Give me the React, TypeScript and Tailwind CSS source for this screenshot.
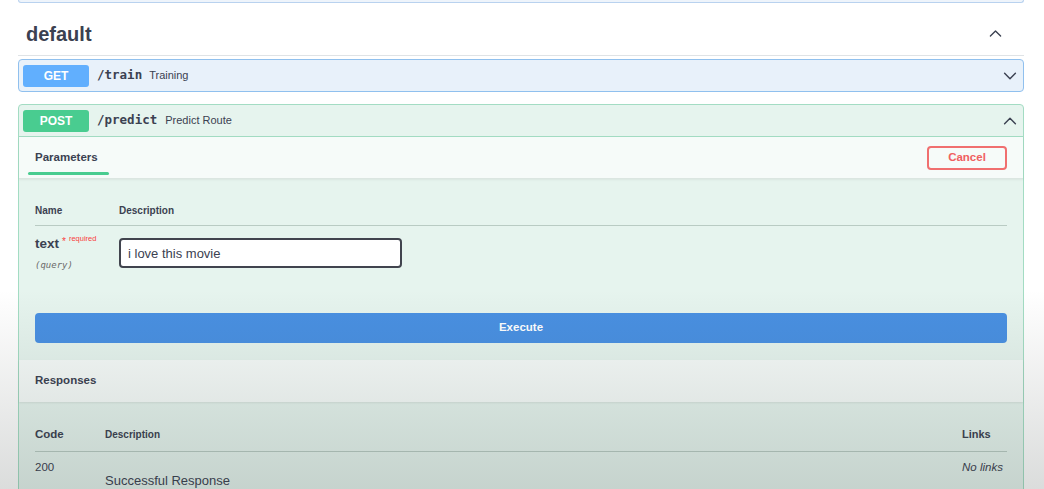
import React, { useState } from 'react';

const Chevron = ({ up, className }: { up?: boolean; className?: string }) => (
  <svg viewBox="0 0 20 20" className={className} fill="none" stroke="currentColor" strokeWidth={1.6} strokeLinecap="round" strokeLinejoin="round">
    {up ? <path d="M4 13 L10 7 L16 13" /> : <path d="M4 7 L10 13 L16 7" />}
  </svg>
);

const App: React.FC = () => {
  const [query, setQuery] = useState('i love this movie');

  return (
    <div className="relative w-full h-[489px] overflow-hidden bg-white text-[#3b4151]" style={{ fontFamily: '"Liberation Sans", Arial, sans-serif' }}>
      <div className="pl-[18px] pr-[20px]">
        {/* tail of the previous section */}
        <div className="h-[3px] border-x border-b border-[#b9d2ef] bg-[#eef4fb] rounded-b-[3px]"></div>

        {/* tag header */}
        <div className="flex items-center justify-between h-[53px] pl-[8px] pr-[20px] border-b border-[#dfe3e6]">
          <h3 className="text-[20px] font-bold text-[#3b4151] mt-[9px]">default</h3>
          <Chevron up className="w-[17px] h-[17px] text-[#3b4151] mt-[8px]" />
        </div>

        {/* GET /train */}
        <div className="mt-[3px] border border-[#90c0ee] bg-[#e8f1fa] rounded-[4px] h-[33px] flex items-center px-[4px]">
          <span className="w-[66px] h-[22px] rounded-[3px] bg-[#61affe] text-white text-[12px] font-bold flex items-center justify-center">GET</span>
          <span className="ml-[8px] text-[12.5px] font-bold text-[#3b4151]" style={{ fontFamily: '"DejaVu Sans Mono", "Liberation Mono", monospace' }}>/train</span>
          <span className="ml-[7px] text-[11px] text-[#3b4151]">Training</span>
          <span className="flex-1"></span>
          <Chevron className="w-[18px] h-[18px] text-[#3b4151]" />
        </div>

        {/* POST /predict */}
        <div className="mt-[12px] border border-[#a3dcc3] bg-[#e6f4ee] rounded-[4px]">
          <div className="h-[32px] flex items-center px-[4px] border-b border-[#a3dcc3]">
            <span className="w-[66px] h-[22px] rounded-[3px] bg-[#49cc90] text-white text-[12px] font-bold flex items-center justify-center">POST</span>
            <span className="ml-[8px] text-[12.5px] font-bold text-[#3b4151]" style={{ fontFamily: '"DejaVu Sans Mono", "Liberation Mono", monospace' }}>/predict</span>
            <span className="ml-[8px] text-[11px] text-[#3b4151]">Predict Route</span>
            <span className="flex-1"></span>
            <Chevron up className="w-[18px] h-[18px] text-[#3b4151]" />
          </div>

          {/* parameters tab bar */}
          <div className="h-[42px] bg-[#f6fbf9] flex items-center justify-between px-[10px] border-b border-[#dbe6e1] shadow-[0_1px_2px_rgba(0,0,0,0.06)]">
            <div className="relative h-full flex items-center px-[6px]">
              <span className="text-[11.5px] font-bold text-[#3b4151]">Parameters</span>
              <span className="absolute left-[-1px] right-[-5px] bottom-[3px] h-[3px] rounded-[2px] bg-[#49cc90]"></span>
            </div>
            <button className="w-[80px] h-[24px] border-2 border-[#f06f6f] rounded-[4px] text-[#f06060] text-[11.5px] font-bold bg-transparent mr-[6px]">
              Cancel
            </button>
          </div>

          {/* parameters table */}
          <div className="px-[16px] pt-[24px]">
            <div className="flex text-[10px] font-bold text-[#3b4151] h-[23px] border-b border-[#b9cbc3]">
              <span className="w-[84px]">Name</span>
              <span>Description</span>
            </div>
            <div className="flex pt-[10px] h-[87px]">
              <div className="w-[84px]">
                <div className="flex items-start">
                  <span className="text-[13.5px] font-bold text-[#3b4151] leading-[16px]">text</span>
                  <span className="text-[#f93e3e] text-[10px] ml-[3px] leading-[12px]">*</span>
                  <span className="text-[#f93e3e] text-[7.5px] ml-[3px] leading-[8px] mt-[-1px]">required</span>
                </div>
                <div className="mt-[7px] text-[9px] italic text-[#6b6b6b]" style={{ fontFamily: '"DejaVu Sans Mono", "Liberation Mono", monospace' }}>(query)</div>
              </div>
              <div>
                <input
                  value={query}
                  onChange={e => setQuery(e.target.value)}
                  className="w-[283px] h-[30px] border-2 border-[#41444e] rounded-[4px] bg-white px-[7px] text-[13px] text-[#3b4151] outline-none mt-[2px]"
                  style={{ fontFamily: '"Liberation Sans", Arial, sans-serif' }}
                />
              </div>
            </div>
          </div>

          {/* execute */}
          <div className="px-[16px] pb-[17px]">
            <button className="w-full h-[30px] rounded-[4px] bg-[#4990e2] text-white text-[11.5px] font-bold">Execute</button>
          </div>

          {/* responses header */}
          <div className="h-[42px] bg-[#f6fbf9] flex items-center px-[16px] shadow-[0_1px_2px_rgba(0,0,0,0.08)]">
            <span className="text-[11.5px] font-bold text-[#3b4151]">Responses</span>
          </div>

          {/* responses table */}
          <div className="px-[16px] pt-[24px]">
            <div className="flex items-center h-[17px] text-[#3b4151]">
              <span className="w-[70px] text-[11.5px] font-bold">Code</span>
              <span className="flex-1 text-[10px] font-bold">Description</span>
              <span className="w-[45px] text-[11px] font-bold">Links</span>
            </div>
            <div className="border-t border-[#b9cbc3] mt-[8px] flex pt-[7px] pb-[10px]">
              <span className="w-[70px] text-[11.5px] text-[#3b4151]">200</span>
              <span className="flex-1 text-[13px] text-[#3b4151] pt-[12px]">Successful Response</span>
              <span className="w-[45px] text-[11.5px] italic text-[#3b4151]">No links</span>
            </div>
          </div>
        </div>
      </div>

      {/* dim overlay of the captured frame */}
      <div className="pointer-events-none absolute inset-x-0 top-[290px] bottom-0 bg-gradient-to-b from-transparent to-[rgba(40,50,46,0.17)]"></div>
    </div>
  );
};

export default App;
